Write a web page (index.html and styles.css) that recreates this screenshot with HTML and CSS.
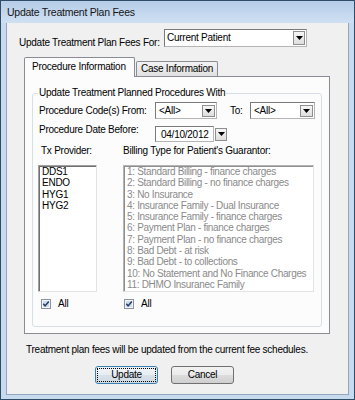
FILE: index.html
```html
<!DOCTYPE html>
<html>
<head>
<meta charset="utf-8">
<title>Update Treatment Plan Fees</title>
<link rel="stylesheet" href="styles.css">
</head>
<body>
<div class="window">
  <div class="titlebar">Update Treatment Plan Fees</div>
  <div class="client">
    <div class="for-row">
      <span class="for-label">Update Treatment Plan Fees For:</span>
      <div class="combo combo-patient">
        <span class="combo-text">Current Patient</span>
        <span class="drop-btn"><svg width="7" height="4" viewBox="0 0 7 4"><polygon points="0,0 7,0 3.5,4" fill="#000"/></svg></span>
      </div>
    </div>

    <div class="tabs">
      <div class="tabstrip">
        <div class="tab tab-active">Procedure Information</div>
        <div class="tab tab-idle">Case Information</div>
      </div>
      <div class="tabpanel">
        <fieldset class="group">
          <legend class="group-title">Update Treatment Planned Procedures With</legend>
          <div class="row row-code">
            <span class="lbl lbl-wide">Procedure Code(s) From:</span>
            <div class="combo combo-from">
              <span class="combo-text">&lt;All&gt;</span>
              <span class="drop-btn"><svg width="7" height="4" viewBox="0 0 7 4"><polygon points="0,0 7,0 3.5,4" fill="#000"/></svg></span>
            </div>
            <span class="lbl lbl-to">To:</span>
            <div class="combo combo-to">
              <span class="combo-text">&lt;All&gt;</span>
              <span class="drop-btn"><svg width="7" height="4" viewBox="0 0 7 4"><polygon points="0,0 7,0 3.5,4" fill="#000"/></svg></span>
            </div>
          </div>
          <div class="row row-date">
            <span class="lbl lbl-wide lbl-date">Procedure Date Before:</span>
            <div class="datebox">04/10/2012</div>
            <span class="drop-btn date-btn"><svg width="7" height="4" viewBox="0 0 7 4"><polygon points="0,0 7,0 3.5,4" fill="#000"/></svg></span>
          </div>
          <div class="cols">
            <div class="col col-prov">
              <div class="col-title">Tx Provider:</div>
              <div class="listbox list-prov">
                <div class="item">DDS1</div>
                <div class="item">ENDO</div>
                <div class="item">HYG1</div>
                <div class="item">HYG2</div>
              </div>
              <div class="check">
                <svg class="cb" width="10" height="10" viewBox="0 0 10 10"><rect x="0.5" y="0.5" width="9" height="9" fill="#f3f5f8" stroke="#8c939c"/><rect x="2" y="2" width="6" height="6" fill="#cfdcea"/><path d="M2.3 4.8 L4.1 6.9 L7.8 2.4" fill="none" stroke="#24386a" stroke-width="1.5"/></svg>
                <span class="check-text">All</span>
              </div>
            </div>
            <div class="col col-bill">
              <div class="col-title">Billing Type for Patient's Guarantor:</div>
              <div class="listbox list-bill">
                <div class="item">1: Standard Billing - finance charges</div>
                <div class="item">2: Standard Billing - no finance charges</div>
                <div class="item">3: No Insurance</div>
                <div class="item">4: Insurance Family - Dual Insurance</div>
                <div class="item">5: Insurance Family - finance charges</div>
                <div class="item">6: Payment Plan - finance charges</div>
                <div class="item">7: Payment Plan - no finance charges</div>
                <div class="item">8: Bad Debt - at risk</div>
                <div class="item">9: Bad Debt - to collections</div>
                <div class="item">10: No Statement and No Finance Charges</div>
                <div class="item">11: DHMO Insuranec Family</div>
              </div>
              <div class="check check-bill">
                <svg class="cb" width="10" height="10" viewBox="0 0 10 10"><rect x="0.5" y="0.5" width="9" height="9" fill="#f3f5f8" stroke="#8c939c"/><rect x="2" y="2" width="6" height="6" fill="#cfdcea"/><path d="M2.3 4.8 L4.1 6.9 L7.8 2.4" fill="none" stroke="#24386a" stroke-width="1.5"/></svg>
                <span class="check-text">All</span>
              </div>
            </div>
          </div>
        </fieldset>
      </div>
    </div>

    <p class="note">Treatment plan fees will be updated from the current fee schedules.</p>

    <div class="buttons">
      <button class="btn btn-default" type="button"><span class="focus">Update</span></button>
      <button class="btn btn-cancel" type="button"><span class="btn-label">Cancel</span></button>
    </div>
  </div>
</div>
</body>
</html>
```

FILE: styles.css
```css
* { box-sizing: border-box; }

html, body {
  margin: 0;
  padding: 0;
  background: #ffffff;
}

body {
  font-family: "Liberation Sans", Arial, sans-serif;
  font-size: 10px;
  letter-spacing: -0.25px;
  color: #000;
}

.window {
  width: 355px;
  height: 400px;
  border: 1px solid #2f4c66;
  background: #c7daee;
  padding: 0 5px 4px 5px;
  display: flex;
  flex-direction: column;
}

.titlebar {
  height: 22px;
  margin: 0 -5px;
  padding: 1px 0 0 6px;
  line-height: 21px;
  font-size: 10.5px;
  color: #141414;
  background: linear-gradient(#b6cde8, #cfe0f2);
}

.client {
  flex: 1;
  background: #f0f0f0;
  border: 1px solid #91a7bf;
  border-top: none;
  display: flex;
  flex-direction: column;
  padding-top: 6px;
}

/* top row */
.for-row {
  display: flex;
  align-items: flex-end;
  height: 18px;
  margin-left: 12px;
}

.for-label {
  width: 145px;
  line-height: 12px;
  margin-bottom: -2px;
}

.combo {
  display: flex;
  align-items: center;
  background: #fff;
  border: 1px solid #b5b5b5;
  border-top-color: #7a7a7a;
  border-left-color: #7a7a7a;
}

.combo-text {
  flex: 1;
  padding-left: 2px;
  line-height: 14px;
}

.combo-patient {
  width: 143px;
  height: 18px;
}

.drop-btn {
  display: flex;
  align-items: center;
  justify-content: center;
  width: 12px;
  height: 13px;
  margin-right: 1px;
  background: linear-gradient(#f6f6f6, #dedede);
  border: 1px solid #8f8f8f;
}

.combo-patient .drop-btn {
  height: 14px;
}

/* tabs */
.tabs {
  margin: 10px 0 0 17px;
  width: 306px;
}

.tabstrip {
  display: flex;
  align-items: flex-end;
  height: 19px;
}

.tab {
  border: 1px solid #898c95;
  border-bottom: none;
  border-radius: 2px 2px 0 0;
}

.tab-active {
  position: relative;
  z-index: 1;
  width: 111px;
  height: 20px;
  margin-bottom: -1px;
  padding-left: 7px;
  line-height: 18px;
  background: #fcfcfc;
}

.tab-idle {
  width: 82px;
  height: 15px;
  margin-left: 1px;
  padding-left: 4px;
  line-height: 14px;
  background: linear-gradient(#f3f3f3, #e1e1e1);
}

.tabpanel {
  height: 258px;
  border: 1px solid #898c95;
  background: #fcfcfc;
  padding-top: 10px;
  padding-left: 7px;
}

/* group box */
.group {
  width: 290px;
  height: 240px;
  margin: 0;
  border: 1px solid #d5dfe5;
  border-radius: 3px;
  padding: 3px 0 0 6px;
  min-width: 0;
}

.group-title {
  padding: 0 1px;
  margin-left: -1px;
  line-height: 12px;
}

.row {
  display: flex;
  align-items: center;
}

.row-code {
  height: 17px;
}

.lbl {
  line-height: 12px;
  white-space: nowrap;
}

.lbl-wide {
  width: 116px;
}

.combo-from {
  width: 62px;
  height: 17px;
}

.combo-from .combo-text,
.combo-to .combo-text {
  padding-left: 3px;
}

.lbl-to {
  width: 20px;
  margin-left: 13px;
}

.combo-to {
  width: 65px;
  height: 17px;
}

.combo-from .drop-btn,
.combo-to .drop-btn {
  width: 13px;
  height: 12px;
}

.row-date {
  margin-top: 7px;
  height: 16px;
}

.lbl-date {
  align-self: flex-start;
  margin-top: -2px;
}

.datebox {
  width: 59px;
  height: 16px;
  padding-left: 5px;
  line-height: 15px;
  background: #fff;
  border: 1px solid #b5b5b5;
  border-top-color: #7a7a7a;
  border-left-color: #7a7a7a;
}

.date-btn {
  margin-left: 1px;
  width: 12px;
  height: 13px;
}

/* lists */
.cols {
  display: flex;
  gap: 26px;
  margin-top: 3px;
  margin-left: -1px;
}

.col-prov { width: 59px; }
.col-bill { width: 191px; }

.col-title {
  line-height: 12px;
  white-space: nowrap;
}

.col-prov .col-title { padding-left: 3px; }

.listbox {
  margin-top: 8px;
  height: 127px;
  background: #fff;
  border: 1px solid;
  border-color: #a0a0a0 #e3e3e3 #e3e3e3 #a0a0a0;
  box-shadow: inset 1px 1px 0 #6f6f6f;
  padding: 0 0 0 3px;
  overflow: hidden;
}

.item {
  line-height: 11.3px;
  white-space: nowrap;
}

.list-bill {
  color: #8a8a8a;
  letter-spacing: -0.32px;
  border-color: #b4b4b4 #e3e3e3 #e3e3e3 #b4b4b4;
  box-shadow: inset 1px 1px 0 #8e8e8e;
}

.check {
  display: flex;
  align-items: center;
  margin-top: 7px;
  margin-left: 3px;
  height: 10px;
}

.check-bill { margin-left: 1px; }

.cb { display: block; flex: none; }

.check-text {
  margin-left: 7px;
  line-height: 12px;
}

/* footer */
.note {
  margin: 10px 0 0 19px;
  line-height: 12px;
  white-space: nowrap;
}

.buttons {
  display: flex;
  gap: 13px;
  margin: 10px 0 0 88px;
}

.btn {
  font: inherit;
  letter-spacing: inherit;
  color: #000;
  height: 18px;
  padding: 0;
  margin: 0;
  border: 1px solid #707070;
  border-radius: 3px;
  background: linear-gradient(#f2f2f2 0%, #ebebeb 50%, #dddddd 50%, #cfcfcf 100%);
  display: flex;
  align-items: stretch;
}

.btn-default {
  width: 63px;
  border-color: #3c7fb1;
  background: linear-gradient(#eef3f7 0%, #e6edf3 50%, #d8e2ea 50%, #cfdae3 100%);
}

.btn-cancel { width: 63px; }

.focus {
  flex: 1;
  margin: 1px;
  border: 1px dotted #000;
  line-height: 12px;
  text-align: center;
}

.btn-label {
  flex: 1;
  line-height: 16px;
  text-align: center;
}
```
